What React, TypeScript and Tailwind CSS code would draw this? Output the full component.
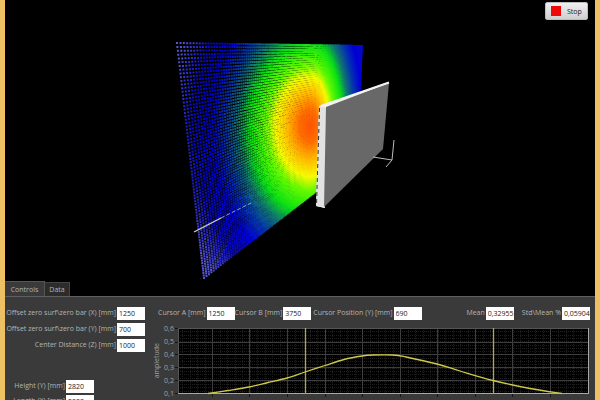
import React from "react";

const W = 590;
const H = 281;

// Corners of the measured plane in scene coordinates: TL, TR, BR, BL.
const quad = [
  [171, 42],
  [356, 45],
  [350, 159],
  [198, 277],
];

function project(u: number, v: number) {
  const [[x0, y0], [x1, y1], [x2, y2], [x3, y3]] = quad;
  const sx = x0 - x1 + x2 - x3;
  const sy = y0 - y1 + y2 - y3;
  const dx1 = x1 - x2;
  const dx2 = x3 - x2;
  const dy1 = y1 - y2;
  const dy2 = y3 - y2;
  const det = dx1 * dy2 - dx2 * dy1;
  const g = (sx * dy2 - dx2 * sy) / det;
  const h = (dx1 * sy - sx * dy1) / det;
  const w = g * u + h * v + 1;
  return [
    ((x1 - x0 + g * x1) * u + (x3 - x0 + h * x3) * v + x0) / w,
    ((y1 - y0 + g * y1) * u + (y3 - y0 + h * y3) * v + y0) / w,
  ];
}

const stops: [number, number[]][] = [
  [0, [255, 84, 0]],
  [0.12, [255, 110, 0]],
  [0.25, [255, 190, 0]],
  [0.36, [245, 250, 0]],
  [0.46, [100, 250, 0]],
  [0.62, [10, 225, 20]],
  [0.74, [15, 120, 110]],
  [0.88, [5, 50, 175]],
  [1.02, [0, 0, 215]],
  [1.2, [10, 10, 190]],
  [1.45, [85, 85, 210]],
];

function heat(x: number, y: number) {
  const dx = x - 305;
  const dy = y - 124;
  const t = Math.min(1.44, Math.hypot(dx / (dx < 0 ? 98 : 50), dy / (dy < 0 ? 132 : 142)));
  let i = 0;
  while (stops[i + 1][0] < t) i++;
  const [a, ca] = stops[i];
  const [b, cb] = stops[i + 1];
  const k = Math.round(((t - a) / (b - a)) * 8) / 8;
  return `rgb(${ca.map((c, n) => Math.round(c + (cb[n] - c) * k)).join(",")})`;
}

function buildDots() {
  const out = new Map<string, string>();
  const cols = 124;
  const rows = 76;
  for (let i = 0; i <= cols; i++) {
    for (let j = 0; j <= rows; j++) {
      const [x, y] = project(i / cols, j / rows);
      const c = heat(x, y);
      const h = x > 240 ? 2.2 : 2;
      out.set(c, (out.get(c) ?? "") + `M${x.toFixed(1)} ${y.toFixed(1)}h2v${h}h-2z`);
    }
  }
  return [...out.entries()];
}

const dots = buildDots();

function Scene() {
  return (
    <svg viewBox={`0 0 ${W} ${H}`} className="block h-full w-full" role="img" aria-label="3D amplitude view">
      {dots.map(([c, d]) => (
        <path key={c} d={d} fill={c} />
      ))}
      <path d="M189 232L216 218" stroke="#d0d0c0" strokeWidth="1.4" />
      <path d="M216 218L248 202" stroke="#8fa0c0" strokeWidth="1" strokeDasharray="4 2" />
      <path d="M314 106L384 82V84L322 108L320 208L311 206Z" fill="#f2f2f2" />
      <path d="M314 106L322 108L320 208L311 206Z" fill="#e2e2e2" />
      <path d="M314.500 108L311.500 206" stroke="#333" strokeWidth="1" strokeDasharray="4 3" />
      <path d="M321 107L384 83L378 149L319 207Z" fill="#686868" />
      <path d="M316 106L384 82.500" stroke="#f4f4f4" strokeWidth="2" />
      <path d="M368 157L387 160M389 140L387 160L381 167" stroke="#bdbdbd" strokeWidth="1" fill="none" />
    </svg>
  );
}

const PW = 411;
const PH = 66;
const majorX = [34, 71, 109, 147, 184, 222, 259, 297, 334, 372];
const majorY = [14, 26, 39, 52];

const profile = [
  [30, 65.5], [50, 62.5], [71, 59], [90, 54.5], [109, 50], [127, 44], [147, 37.5], [166, 31.5],
  [184, 28], [195, 27], [215, 27], [228, 29], [259, 36], [282, 43], [315, 52.5], [352, 60.5], [384, 65.5],
];

function smooth(p: number[][]) {
  let d = `M${p[0][0]} ${p[0][1]}`;
  for (let i = 0; i < p.length - 1; i++) {
    const a = p[Math.max(0, i - 1)];
    const b = p[i];
    const c = p[i + 1];
    const e = p[Math.min(p.length - 1, i + 2)];
    d += `C${b[0] + (c[0] - a[0]) / 6} ${b[1] + (c[1] - a[1]) / 6} ${c[0] - (e[0] - b[0]) / 6} ${c[1] - (e[1] - b[1]) / 6} ${c[0]} ${c[1]}`;
  }
  return d;
}

function Plot() {
  return (
    <svg viewBox={`0 0 ${PW} ${PH}`} preserveAspectRatio="none" className="block h-[66px] w-full overflow-visible bg-black" role="img" aria-label="Amplitude profile">
      <g stroke="#1f1f1f" strokeDasharray="1 1" shapeRendering="crispEdges">
        {Array.from({ length: 54 }, (_, i) => (
          <path key={i} d={`M${Math.round(i * 7.52 + 4)}.5 0V${PH}`} />
        ))}
        {Array.from({ length: 20 }, (_, i) => (
          <path key={i} d={`M0 ${Math.round(i * 3.3)}.5H${PW}`} />
        ))}
      </g>
      <g stroke="#3e3e3e" shapeRendering="crispEdges">
        {majorX.map((x) => (
          <path key={x} d={`M${x}.5 0V${PH}`} />
        ))}
        {majorY.map((y) => (
          <path key={y} d={`M0 ${y}.5H${PW}`} />
        ))}
      </g>
      <path d="M0.500 0V66M0 0.500H411" stroke="#555" />
      <g stroke="#161616" shapeRendering="crispEdges">
        {majorX.map((x) => (
          <path key={x} d={`M${x}.5 66v3`} />
        ))}
        {[0, ...majorY, 65].map((y) => (
          <path key={y} d={`M-3 ${y}.5h3`} />
        ))}
      </g>
      <path d="M0 65.500H411M410.500 0V66" stroke="#a8a8a8" strokeWidth="1" />
      <path d="M127.500 0V66M315.500 0V66" stroke="#b0a840" strokeWidth="1.3" />
      <path d={smooth(profile)} fill="none" stroke="#cfca45" strokeWidth="1.3" />
    </svg>
  );
}

function Field({ id, label, value }: { id: string; label: string; value: string }) {
  return (
    <div className="flex items-start gap-px whitespace-nowrap">
      <label htmlFor={id} className="leading-[11px]">{label}</label>
      <input id={id} defaultValue={value} className="h-[13px] w-[28px] bg-white pl-[2px] text-[7px] text-[#222] outline-none" />
    </div>
  );
}

const yTicks = ["0,6", "0,5", "0,4", "0,3", "0,2", "0,1"];
const xTicks = ["1500", "2000", "2500", "3000", "3500", "4000", "4500", "5000", "5500", "6000", "6500"];

export default function App() {
  return (
    <main className="flex h-screen flex-col overflow-hidden border-x-[5px] border-[#ecc063] bg-black font-['Open_Sans','Noto_Sans',sans-serif] text-[7px] leading-[13px] text-[#b4b4b4]">
      <section className="relative min-h-0 flex-1">
        <Scene />
        <button className="absolute top-[2px] right-[7px] flex h-[18px] w-[43px] items-center gap-[6px] rounded-[2px] border border-[#bbb] bg-linear-to-b from-[#f0f0f0] to-[#cfcfcf] pl-[5px] text-[#222]">
          <span className="size-[10px] bg-[#ee0808]" />
          Stop
        </button>
      </section>
      <section className="h-[119px] shrink-0">
        <div role="tablist" className="flex h-[15px] items-end">
          <button role="tab" aria-selected="true" className="h-[15px] w-[40px] border-t border-r border-[#555] bg-[#3a3a3a]">
            Controls
          </button>
          <button role="tab" aria-selected="false" className="h-[14px] w-[25px] border-t border-r border-[#444] bg-[#2c2c2c]">
            Data
          </button>
        </div>
        <div className="flex h-[104px] border-t border-[#606060] bg-[#3a3a3a] pt-[10px]">
          <div className="w-[140px] shrink-0">
            <div className="flex flex-col items-end gap-[3px]">
              <Field id="ox" label="Offset zero surf\zero bar (X) [mm]" value="1250" />
              <Field id="oy" label="Offset zero surf\zero bar (Y) [mm]" value="700" />
              <Field id="cz" label="Center Distance (Z) [mm]" value="1000" />
            </div>
            <div className="mt-[28px] flex w-[89px] flex-col items-end gap-[2px]">
              <Field id="hy" label="Height (Y) [mm]" value="2820" />
              <Field id="lx" label="Length (X) [mm]" value="2800" />
            </div>
          </div>
          <div className="min-w-0 flex-1">
            <div className="flex items-center pr-[5px] pl-[13px]">
              <Field id="ca" label="Cursor A [mm]" value="1250" />
              <Field id="cb" label="Cursor B [mm]" value="3750" />
              <div className="w-[2px]" />
              <Field id="cp" label="Cursor Position (Y) [mm]" value="690" />
              <div className="flex-1" />
              <Field id="mean" label="Mean" value="0,32955" />
              <div className="w-[8px]" />
              <Field id="std" label="Std\Mean %" value="0,05904" />
            </div>
            <div className="mt-[8px] flex items-start pr-[6px] text-[#a0a0a0]">
              <div className="flex h-[66px] w-[18px] items-center justify-end">
                <span className="rotate-180 [writing-mode:vertical-rl]">ampletude</span>
              </div>
              <div className="-my-[6px] flex w-[12px] flex-col items-center">
                {yTicks.map((t) => (
                  <span key={t}>{t}</span>
                ))}
              </div>
              <div className="ml-[3px] min-w-0 flex-1">
                <Plot />
                <div className="-mx-[19px] mt-[2px] flex justify-between">
                  {xTicks.map((t) => (
                    <span key={t} className="w-[38px] text-center">{t}</span>
                  ))}
                </div>
              </div>
            </div>
          </div>
        </div>
      </section>
    </main>
  );
}
